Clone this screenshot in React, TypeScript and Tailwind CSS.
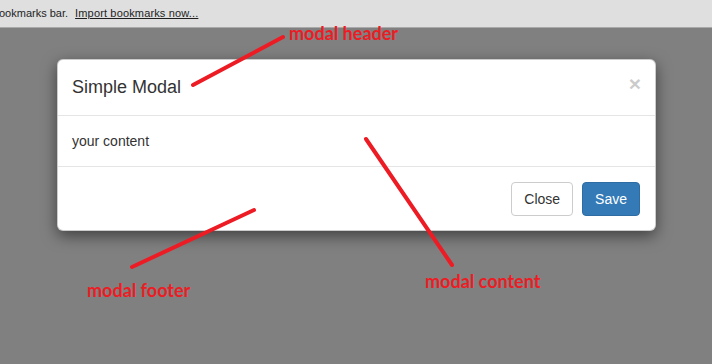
export default function App() {
  return (
    <div className="relative w-[712px] h-[364px] overflow-hidden bg-[#808080]" style={{ fontFamily: '"Liberation Sans", Arial, sans-serif' }}>
      <div className="h-[28px] bg-[#dfdfdf] border-b border-[#a9a9a9] flex items-center text-[11px] text-[#1e1e1e]" style={{ fontFamily: '"Liberation Sans", Arial, sans-serif' }}>
        <span className="-ml-[1px]">ookmarks bar.</span>
        <span className="ml-[7px] underline tracking-[0.15px]">Import bookmarks now...</span>
      </div>
      <div className="pt-[31px]">
        <div className="ml-[57px] w-[599px] bg-white rounded-[6px] border border-black/20 shadow-[0_5px_15px_rgba(0,0,0,0.5)] text-[#333]">
          <div className="px-[15px] py-[15px] border-b border-[#e5e5e5] flex items-start justify-between">
            <h4 className="text-[18px] leading-[25px] -ml-[1px]">Simple Modal</h4>
            <span className="text-[21px] font-bold leading-[20px] text-black opacity-20 -mr-[1px] -mt-[1px]">×</span>
          </div>
          <div className="pt-[15px] pb-[15px] pr-[15px] pl-[14px] text-[14px] leading-[20px]">your content</div>
          <div className="px-[15px] pt-[15px] pb-[14px] border-t border-[#e5e5e5] flex justify-end gap-[9px]">
            <button className="px-[12px] h-[34px] text-[14px] border border-[#ccc] rounded-[4px] bg-white text-[#333]">Close</button>
            <button className="px-[12px] h-[34px] text-[14px] border border-[#2e6da4] rounded-[4px] bg-[#337ab7] text-white">Save</button>
          </div>
        </div>
      </div>
      <svg className="absolute inset-0" width="712" height="364">
        <g stroke="#ed1c24" strokeWidth="4" strokeLinecap="round">
          <line x1="193" y1="85" x2="283" y2="37" />
          <line x1="366" y1="139" x2="452" y2="265" />
          <line x1="254" y1="210" x2="132" y2="267" />
        </g>
      </svg>
      <div className="absolute left-[289px] top-[23px] text-[18px] font-bold text-[#ed1c24] leading-[20px]" style={{ fontFamily: 'Lato, "Open Sans", sans-serif' }}>modal header</div>
      <div className="absolute left-[425px] top-[271px] text-[18px] font-bold text-[#ed1c24] leading-[20px]" style={{ fontFamily: 'Lato, "Open Sans", sans-serif' }}>modal content</div>
      <div className="absolute left-[87px] top-[280px] text-[18px] font-bold text-[#ed1c24] leading-[20px]" style={{ fontFamily: 'Lato, "Open Sans", sans-serif' }}>modal footer</div>
    </div>
  );
}
